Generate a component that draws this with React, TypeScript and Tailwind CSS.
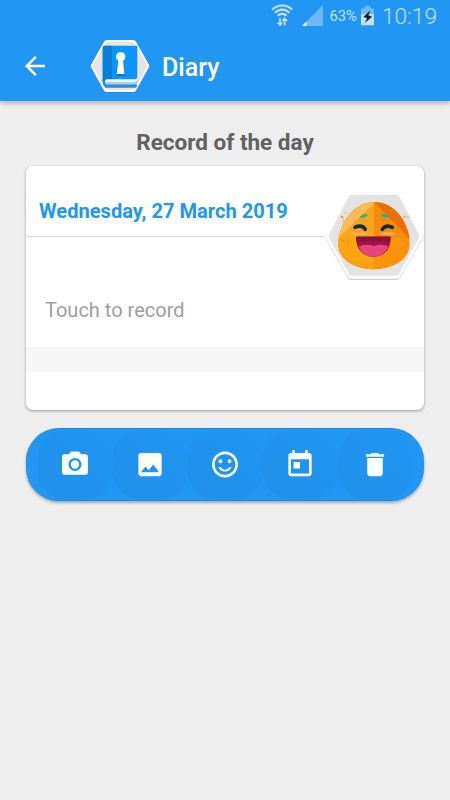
// Diary entry screen with record card and action toolbar

import React from 'react';

const actions = [
  {
    id: 'camera',
    label: 'Take photo',
    path: 'M9 2L7.17 4H4c-1.1 0-2 .9-2 2v12c0 1.1.9 2 2 2h16c1.1 0 2-.9 2-2V6c0-1.1-.9-2-2-2h-3.17L15 2H9zm3 15c-2.76 0-5-2.24-5-5s2.24-5 5-5 5 2.24 5 5-2.24 5-5 5zm0-1.8a3.2 3.2 0 1 0 0-6.4 3.2 3.2 0 0 0 0 6.4z',
  },
  {
    id: 'image',
    label: 'Add image',
    path: 'M21 19V5c0-1.1-.9-2-2-2H5c-1.1 0-2 .9-2 2v14c0 1.1.9 2 2 2h14c1.1 0 2-.9 2-2zM8.5 13.5l2.5 3.01L14.5 12l4.5 6H5l3.5-4.5z',
  },
  {
    id: 'mood',
    label: 'Choose mood',
    path: 'M11.99 2C6.47 2 2 6.48 2 12s4.47 10 9.99 10C17.52 22 22 17.52 22 12S17.52 2 11.99 2zM12 20c-4.42 0-8-3.58-8-8s3.58-8 8-8 8 3.58 8 8-3.58 8-8 8zm3.5-9c.83 0 1.5-.67 1.5-1.5S16.33 8 15.5 8 14 8.67 14 9.5s.67 1.5 1.5 1.5zm-7 0c.83 0 1.5-.67 1.5-1.5S9.33 8 8.5 8 7 8.67 7 9.5 7.67 11 8.5 11zm3.5 5c-1.48 0-2.75-.81-3.45-2H6.88c.8 2.05 2.79 3.5 5.12 3.5s4.32-1.45 5.12-3.5h-1.67c-.69 1.19-1.97 2-3.45 2z',
  },
  {
    id: 'date',
    label: 'Pick date',
    path: 'M19 3h-1V1h-2v2H8V1H6v2H5c-1.11 0-1.99.9-1.99 2L3 19c0 1.1.89 2 2 2h14c1.1 0 2-.9 2-2V5c0-1.1-.9-2-2-2zm0 16H5V8h14v11zM7 10h5v5H7v-5z',
  },
  {
    id: 'delete',
    label: 'Delete',
    path: 'M6 19c0 1.1.9 2 2 2h8c1.1 0 2-.9 2-2V7H6v12zM19 4h-3.5l-1-1h-5l-1 1H5v2h14V4z',
  },
];

const StatusBar: React.FC = () => (
  <div className="flex h-[33px] items-start justify-end pr-[13px] text-[#c2e1fb]">
    <svg className="mt-[3px] h-[24px] w-[24px]" viewBox="0 0 24 24" fill="none" stroke="currentColor" strokeWidth="2.1">
      <path d="M2.2 6.7C7.5 1 17 1 22.2 6.7M5 9.9c4-4.3 10.5-4.3 14.4 0M7.8 12.8c2.5-2.6 6.4-2.6 8.8 0" />
      <path d="M10 15v7M7.6 19.5L10 22l2.2-2.5M14.6 22.5v-7M12.4 18l2.2-2.5L17 18" strokeWidth="1.7" />
    </svg>
    <svg className="ml-[8px] mt-[5px] h-[21px] w-[21px]" viewBox="0 0 21 21">
      <path d="M21 0v21H0z" fill="#6fb9f7" />
      <path d="M4.5 16.5V21H0z" fill="#eaf5fe" />
    </svg>
    <span className="ml-[7px] mt-[9px] text-[14.7px] leading-none">63%</span>
    <svg className="ml-[4px] mt-[5px] h-[21px] w-[13px]" viewBox="0 0 14 21">
      <path d="M4 0h6v3h4v6H0V3h4z" fill="#6fb9f7" />
      <path d="M0 9h14v12H0z" fill="#c2e1fb" />
      <path d="M10 5L2.500 12.200l4 1.300L4 18.500l8-6.700-4-1.500z" fill="#10233c" />
    </svg>
    <span className="ml-[8px] mt-[6px] text-[22.7px] font-light leading-none">10:19</span>
  </div>
);

const DiaryLogo: React.FC = () => (
  <svg className="h-[56px] w-[60px]" viewBox="0 0 60 56">
    <path d="M17 3h26q2 0 3 1.800L58.800 27q1 1.500 0 3L46 53.200q-1 1.600-3 1.600H17q-2 0-3-1.600L1.200 30q-1-1.500 0-3L14 4.800Q15 3 17 3z" fill="#1769aa" opacity=".3" />
    <path d="M17 2h26q2 0 3 1.800L58.800 26.500q1 1.500 0 3L46 52.400q-1 1.600-3 1.600H17q-2 0-3-1.600L1.200 29.500q-1-1.500 0-3L14 3.800Q15 2 17 2z" fill="#fff" />
    <path d="M17.500 4h25q1.200 0 2 1.300L57 27q.6 1 0 2L44.500 51q-.8 1.200-2 1.200h-25q-1.200 0-2-1.200L3 29q-.6-1 0-2L15.500 5.300q.8-1.300 2-1.300z" fill="#e5e5e5" />
    <path d="M13 44l2 6h31q1.300-1 1.300-3z" fill="#97918e" />
    <path d="M15 7.700h32.300V42L46 48.700H17q-4.300 0-4.300-4.700V10q0-2.300 2.300-2.300z" fill="#0a95f8" />
    <path d="M15 7.700h7v33.600h-5q-2.500 0-4.300 2.700V10q0-2.300 2.300-2.300z" fill="#087fd6" />
    <path d="M17 41.300h27.500q2 0 3-2v2.600q-1 2.200-3 2.200H15q0-2.800 2-2.800z" fill="#f2f6f8" />
    <path d="M15 44.100h29.500q2 0 3-1.600v2.300q-1 1.800-3 1.800H17q-2 0-2-2.500z" fill="#bcccd6" />
    <path d="M26.200 38l1.500-14h6.200l1.500 14z" fill="#075b9b" opacity=".5" />
    <path d="M26.700 36l1.600-13.300a4.700 4.700 0 1 1 4.800 0L34.500 36z" fill="#fff" />
  </svg>
);

const MoodBadge: React.FC = () => (
  <svg className="h-[92px] w-[100px]" viewBox="0 0 100 92">
    <path d="M27 4h46q2 0 3 2l22.300 38q1 2 0 4L76 87q-1 2-3 2H27q-2 0-3-2L1.700 48q-1-2 0-4L24 6q1-2 3-2z" fill="#777" opacity=".35" />
    <path d="M27 2h46q2 0 3 2l22.300 39q1 2 0 4L76 85.700q-1 2-3 2H27q-2 0-3-2L1.700 47q-1-2 0-4L24 4q1-2 3-2z" fill="#fff" />
    <path d="M27.500 4h45q1.800 0 2.800 1.800L94.800 43q1 2 0 4L75 83q-1 1.700-2.800 1.700H27.800Q26 84.700 25 83L5.200 47q-1-2 0-4L24.700 5.800Q25.700 4 27.500 4z" fill="#e3e3e3" />
    <path d="M50 11C29 11 14.300 34 14.300 53c0 16 17.700 25.300 35.700 25.300S85.700 69 85.700 53C85.700 34 71 11 50 11z" fill="#f9930c" />
    <path d="M50 11C29 11 14.300 34 14.300 53c0 16 17.700 25.300 35.700 25.300V11z" fill="#faa70f" />
    <path d="M50 11C34 11 18.500 27 14.800 47L50 13z" fill="#fdbc57" />
    <path d="M50 12L15 47q12 2 35 0z" fill="#fba41d" />
    <path d="M50 11c20 0 33.500 18.500 35.500 37z" fill="#e97006" />
    <path d="M50 12l35.500 36Q70 49 50 46z" fill="#f78c0d" />
    <path d="M14.300 53C14.500 66 29 73 50 70v8.300c-18 0-35.700-9-35.700-25.300z" fill="#f9a00c" />
    <path d="M26.500 42.500q9-3 18.500 0-9 3.500-18.500 0zM55 42.500q9-2.500 18 0-8 3.500-18 0z" fill="#fdb742" />
    <path d="M36 26.500q3-4.500 7.500-2.500-3 3-7.500 2.500zM57 24q5-2 8 2-5 1.500-8-2z" fill="#20b6a1" stroke="#20b6a1" strokeWidth=".8" />
    <path d="M31 36.300q7-3.300 10.300 2M58.300 38.300q3.700-5.300 10-2" fill="none" stroke="#12284a" strokeWidth="3.600" strokeLinecap="round" />
    <path d="M32 45.700h34.700C67 58 60 65.800 49.500 65.800S31.500 58 32 45.700z" fill="#a3124d" />
    <path d="M34.800 56q3-2.500 8-2.300 4 0 7 1.300 3-1.300 7-1.300 4.700-.2 7.500 1.800c-3 7-7.800 10.300-14.800 10.300S37.800 63 34.800 56z" fill="#e2467a" />
    <path d="M32 45.700h34.700q-.7 4-1.200 5h-32q-1.300-1.500-1.500-5z" fill="#900f43" />
    <path d="M34 45.700h31v1H34z" fill="#6d1b35" />
    <g fill="#f29a1c">
      <circle cx="18" cy="26" r="1.300" />
      <circle cx="21.500" cy="22" r=".8" />
      <circle cx="19.500" cy="29.500" r=".7" />
      <circle cx="80.500" cy="25.700" r="1" />
      <circle cx="84" cy="26.300" r=".7" />
    </g>
    <g fill="#ed920c">
      <circle cx="19.500" cy="50" r="1.200" />
      <circle cx="24" cy="47.500" r=".8" />
      <circle cx="24" cy="52.500" r=".8" />
    </g>
    <g fill="#fbb11c">
      <circle cx="70" cy="52.500" r="1" />
      <circle cx="73.500" cy="48" r="1" />
      <circle cx="78.500" cy="53" r="1" />
    </g>
  </svg>
);

export default function App() {
  return (
    <div className="flex h-[800px] w-[450px] flex-col overflow-hidden bg-[#eeeeee] font-[Roboto,sans-serif]">
      {/* Header */}
      <header className="h-[101px] shrink-0 bg-[#2196f3] shadow-[0_2px_5px_rgba(0,0,0,0.28)]">
        <StatusBar />
        <div className="flex h-[66px] items-center pl-[20px] text-white">
          <button aria-label="Back">
            <svg className="h-[30px] w-[30px]" viewBox="0 0 24 24" fill="currentColor">
              <path d="M20 11H7.830l5.590-5.590L12 4l-8 8 8 8 1.410-1.410L7.830 13H20v-2z" />
            </svg>
          </button>
          <div className="ml-[40px]">
            <DiaryLogo />
          </div>
          <h1 className="ml-[12px] mt-[3px] text-[25px] font-medium leading-none">Diary</h1>
        </div>
      </header>

      <main className="px-[26px]">
        <h2 className="mt-[28px] text-center text-[22.5px] font-bold leading-[26px] text-[#616161]">Record of the day</h2>

        {/* Record card */}
        <section className="relative mt-[11px] h-[244px] rounded-[7px] bg-white shadow-[0_1px_3px_rgba(0,0,0,0.38)]">
          <div className="flex h-[71px] items-end border-b border-[#dedede] pb-[12px] pl-[13px]">
            <p className="text-[20.1px] font-bold leading-[26px] text-[#2196f3]">Wednesday, 27 March 2019</p>
          </div>
          <div className="flex h-[110px] items-center pl-[19px] pt-[36px]">
            <p className="text-[20px] text-[#9e9e9e]">Touch to record</p>
          </div>
          <div className="h-[25px] bg-[#f7f7f7]" />
          <div className="absolute right-0 top-[25px]">
            <MoodBadge />
          </div>
        </section>

        {/* Toolbar */}
        <nav className="mt-[18px] flex h-[73px] items-center justify-center rounded-[33px] border-y border-[#0d8ff2] bg-[#2196f3] shadow-[0_2px_3px_rgba(0,0,0,0.3)]">
          {actions.map((action) => (
            <button
              key={action.id}
              aria-label={action.label}
              className="flex h-[69px] w-[75px] items-center justify-center rounded-[27px] bg-linear-to-tr from-[#2190e9] to-[#2196f3] text-white"
            >
              <svg className="h-[31px] w-[32px]" viewBox="0 0 24 24" fill="currentColor" fillRule="evenodd">
                <path d={action.path} />
              </svg>
            </button>
          ))}
        </nav>
      </main>
    </div>
  );
}
